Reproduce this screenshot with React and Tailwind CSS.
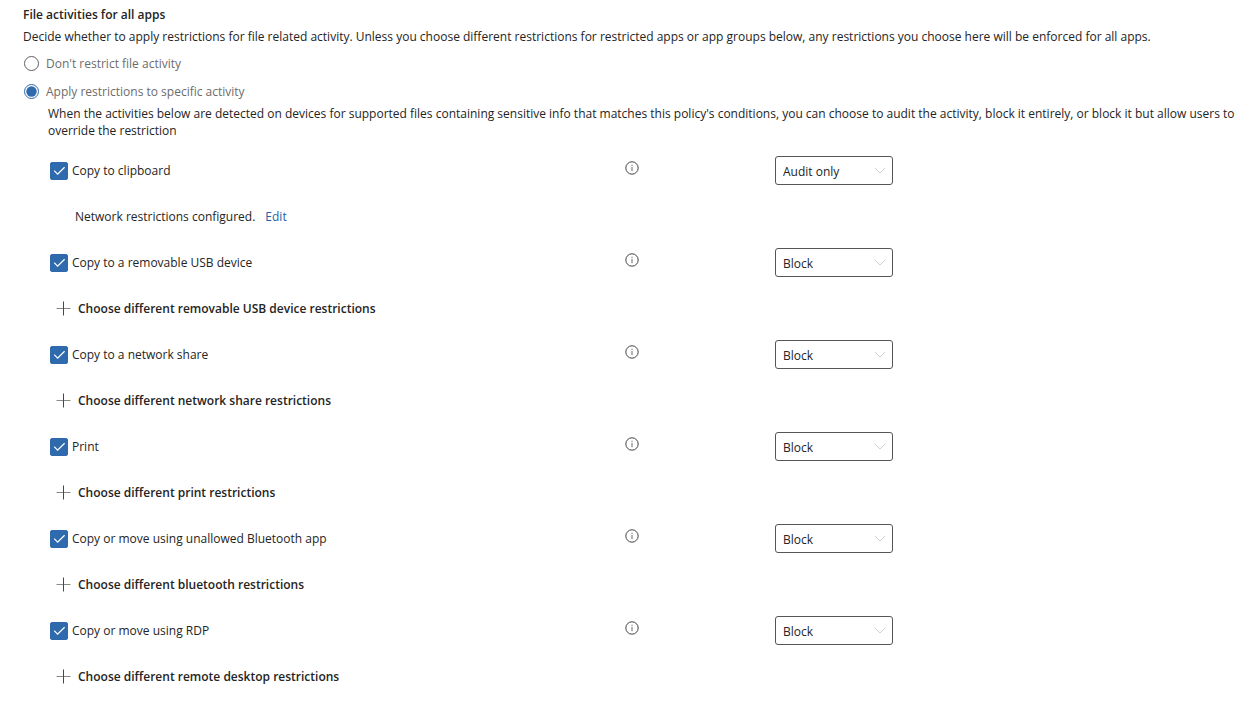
import { useState } from "react";

const ACTIVITIES = [
  { id: "clipboard", label: "Copy to clipboard", action: "Audit only", configured: true },
  { id: "usb", label: "Copy to a removable USB device", action: "Block", more: "Choose different removable USB device restrictions" },
  { id: "share", label: "Copy to a network share", action: "Block", more: "Choose different network share restrictions" },
  { id: "print", label: "Print", action: "Block", more: "Choose different print restrictions" },
  { id: "bluetooth", label: "Copy or move using unallowed Bluetooth app", action: "Block", more: "Choose different bluetooth restrictions" },
  { id: "rdp", label: "Copy or move using RDP", action: "Block", more: "Choose different remote desktop restrictions" },
];

function InfoIcon() {
  return (
    <svg viewBox="0 0 14 14" className="size-3.5" fill="none" aria-hidden="true">
      <circle cx="7" cy="7" r="6.2" stroke="#444" strokeWidth="1" />
      <path d="M7 6v4.2" stroke="#666" strokeWidth="1" />
      <path d="M7 3.8v1.2" stroke="#666" strokeWidth="1" />
    </svg>
  );
}

function PlusIcon() {
  return (
    <svg viewBox="0 0 15 15" className="size-[15px]" fill="none" strokeWidth="1" aria-hidden="true">
      <path d="M0.5 7.5h14" stroke="#8a8a8a" />
      <path d="M7.5 0.5v14" stroke="#484848" />
    </svg>
  );
}

function Radio({ label, value, selected, onSelect }) {
  return (
    <label className="flex h-[18px] items-center gap-[7px] text-[#6e6c6a]">
      <span className="grid size-[15px] place-items-center">
        <input
          type="radio"
          name="file-activity"
          value={value}
          checked={selected}
          onChange={() => onSelect(value)}
          className="peer col-start-1 row-start-1 size-[15px] appearance-none rounded-full border border-[#616161] bg-white checked:border-[#2f6aad]"
        />
        <svg viewBox="0 0 15 15" className="pointer-events-none col-start-1 row-start-1 hidden size-[15px] peer-checked:block" aria-hidden="true">
          <circle cx="7.5" cy="7.5" r="5.2" fill="#2f6aad" />
        </svg>
      </span>
      {label}
    </label>
  );
}

function Activity({ item }) {
  const [checked, setChecked] = useState(true);
  const [action, setAction] = useState(item.action);
  return (
    <li>
      <div className="grid grid-cols-[575fr_150fr_459fr] items-center">
        <label className="flex items-center gap-1">
          <span className="grid size-[18px] place-items-center">
            <input
              type="checkbox"
              checked={checked}
              onChange={(e) => setChecked(e.target.checked)}
              className="peer col-start-1 row-start-1 size-[18px] appearance-none rounded-xs border border-[#616161] checked:border-[#2f6aad] checked:bg-[#2f6aad]"
            />
            <svg viewBox="0 0 18 18" className="pointer-events-none col-start-1 row-start-1 hidden size-[18px] peer-checked:block" fill="none" stroke="#fff" strokeWidth="1.2" aria-hidden="true">
              <path d="M4.2 8.7l3.4 3.4 7-6.8" />
            </svg>
          </span>
          {item.label}
        </label>
        <button type="button" aria-label={"About " + item.label} className="mb-[5px] w-3.5">
          <InfoIcon />
        </button>
        <span className="grid w-[118px] items-center">
          <select
            aria-label={"Action for " + item.label}
            value={action}
            onChange={(e) => setAction(e.target.value)}
            className="col-start-1 row-start-1 h-[29px] w-full appearance-none rounded-[3px] border border-[#555] bg-white pt-px pl-[7px]"
          >
            <option>Audit only</option>
            <option>Block with override</option>
            <option>Block</option>
          </select>
          <svg viewBox="0 0 12 7" className="pointer-events-none col-start-1 row-start-1 mr-[7px] mb-px h-[7px] w-3 justify-self-end" fill="none" stroke="#d2d0ce" strokeWidth="1" aria-hidden="true">
            <path d="M0.8 0.8L6 6l5.2-5.2" />
          </svg>
        </span>
      </div>
      {item.configured ? (
        <p className="mt-[21px] flex h-5 items-center gap-2.5 pl-[25px]">
          Network restrictions configured.
          <a href="#edit" className="text-[#1f62a8]">Edit</a>
        </p>
      ) : (
        <button type="button" className="mt-[21px] flex h-5 items-center gap-[7px] pl-1.5 font-semibold">
          <PlusIcon />
          {item.more}
        </button>
      )}
    </li>
  );
}

export default function App() {
  const [mode, setMode] = useState("specific");
  return (
    <main className="min-h-screen bg-white pt-1.5 pr-4 pb-4 pl-[23px] font-['Open_Sans','Noto_Sans',sans-serif] text-[12px] leading-[17px] text-[#242424]">
      <h2 className="font-semibold">File activities for all apps</h2>
      <p className="mt-[5px]">
        Decide whether to apply restrictions for file related activity. Unless you choose different restrictions for restricted apps or app groups below, any restrictions you choose here will be enforced for all apps.
      </p>
      <div role="radiogroup" aria-label="File activities for all apps" className="mt-[9px] flex flex-col items-start gap-2.5 pl-px">
        <Radio label="Don't restrict file activity" value="none" selected={mode === "none"} onSelect={setMode} />
        <Radio label="Apply restrictions to specific activity" value="specific" selected={mode === "specific"} onSelect={setMode} />
      </div>
      <p className="mt-[5px] pl-[25px]">
        When the activities below are detected on devices for supported files containing sensitive info that matches this policy's conditions, you can choose to audit the activity, block it entirely, or block it but allow users to override the restriction
      </p>
      <ul className="mt-[17px] flex flex-col gap-[22px] pr-2 pl-[27px]">
        {ACTIVITIES.map((item) => (
          <Activity key={item.id} item={item} />
        ))}
      </ul>
    </main>
  );
}
